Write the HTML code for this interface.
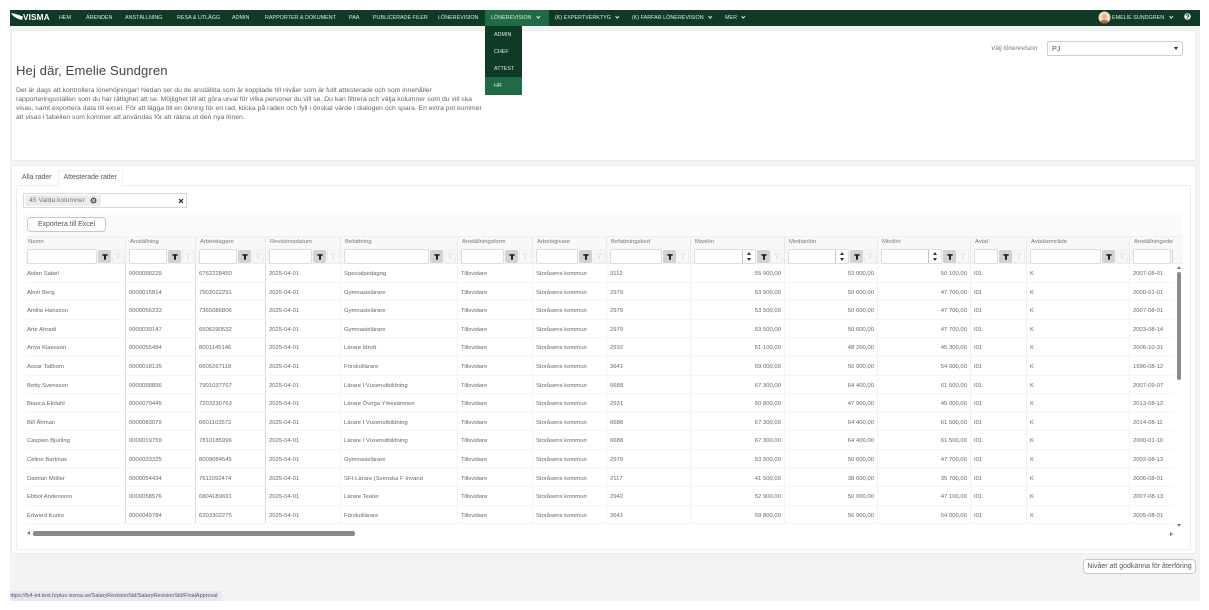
<!DOCTYPE html>
<html lang="sv"><head><meta charset="utf-8"><title>Lönerevision</title>
<style>
*{box-sizing:border-box}
html,body{margin:0;padding:0;background:#fff}
body{width:1209px;height:610px;overflow:hidden;position:relative;font-family:"Liberation Sans",sans-serif;color:#666;filter:blur(.3px)}
.a{position:absolute;white-space:nowrap}
#bg{left:10px;top:10px;width:1190px;height:591px;background:#f3f3f3}
#nav{left:10px;top:10px;width:1190px;height:15.5px;background:#0f3a25}
.n{position:absolute;top:14.5px;font-size:5.4px;line-height:7px;color:#dfe8e3;white-space:nowrap}
.panel{background:#fff;border:1px solid #ebebeb;border-radius:2px}
.ch{display:inline-block;width:2.6px;height:2.6px;border-right:.6px solid #dfe8e3;border-bottom:.6px solid #dfe8e3;transform:rotate(45deg);margin-left:5.5px;position:relative;top:-1px}
#tb{left:23px;top:213px;width:1160px;height:323px;background:#fff;overflow:hidden}
#head{position:absolute;left:3px;top:23px;height:28px;width:1160px;background:#f8f8f8;display:flex;border-top:1px solid #f0f0f0;border-bottom:1px solid #f0f0f0}
.h{position:relative;height:27px;border-right:1px solid #e8e8e8;font-size:5.9px;color:#777;padding:2px 0 0 4px;white-space:nowrap;overflow:hidden}
.f{position:absolute;left:3px;right:0;top:12px;height:15px;display:flex}
.f i{display:block;flex:1;min-width:0;background:#fff;border:1px solid #dcdcdc;border-radius:2px;position:relative;box-shadow:0 1px 1px #eee}
.f b{display:block;width:13px;height:13px;margin:1px 0 0 1px;background:#d2d2d2;border-radius:2px;position:relative;flex:none}
.f u{display:block;width:12px;height:13px;margin:1px 1px 0 1px;background:#f8f8f8;border:1px solid #eee;border-radius:2px;flex:none;position:relative}
.f svg{position:absolute;left:3.5px;top:3.5px;width:6px;height:6px}
.f u svg{left:2px;top:2px}
.sp{position:absolute;right:0;top:0;width:13px;height:13px;background:#fff;border-left:1px solid #c4c4c4}
.sp:before{content:"";position:absolute;left:3.5px;top:1.5px;border:2.5px solid transparent;border-top:0;border-bottom:3px solid #333}
.sp:after{content:"";position:absolute;left:3.5px;top:8px;border:2.5px solid transparent;border-bottom:0;border-top:3px solid #333}
#rows{position:absolute;left:3px;top:51px;width:1147px;height:268px;overflow:hidden}
.r{display:flex;height:18.6px;border-bottom:1px solid #f5f5f5;font-size:5.9px;line-height:20.5px;color:#666}
.r span{display:block;flex:none;padding-left:2px;white-space:nowrap;overflow:hidden;border-right:1px solid #f3f3f3}
.r span:nth-child(1){width:100px;padding-left:1px;border-right-color:#dcdcdc}
.r span:nth-child(2){width:70px;padding-left:3px;border-right-color:#dcdcdc}
.r span:nth-child(3){width:70px;padding-left:3px;border-right-color:#dcdcdc}
.r span:nth-child(4){width:75px;padding-left:3px}
.r span:nth-child(5){width:117px;padding-left:3px}
.r span:nth-child(6){width:75px;padding-left:3px}
.r span:nth-child(7){width:74px;padding-left:3px}
.r span:nth-child(8){width:84px;padding-left:3px}
.r span:nth-child(9){width:94px;text-align:right;padding-right:3px}
.r span:nth-child(10){width:93px;text-align:right;padding-right:3px}
.r span:nth-child(11){width:93px;text-align:right;padding-right:3px}
.r span:nth-child(12){width:56px;padding-left:3px}
.r span:nth-child(13){width:103px;padding-left:3px}
.r span:nth-child(14){width:43px;padding-left:3px;border:0}
.btn{background:#fff;border:1px solid #c8c8c8;border-radius:4px;color:#555;text-align:center}
</style></head><body>
<div class="a" id="bg"></div>
<div class="a" id="nav"></div>
<svg class="a" style="left:10.5px;top:12px" width="12" height="10" viewBox="0 0 12 10"><path d="M0 1.5 C3 1 7 3 12 4.5 L11 8 C7 7 3 5.5 0 1.5Z" fill="#fff"/></svg>
<div class="a" style="left:23px;top:12px;font-size:8.3px;line-height:11px;font-weight:bold;color:#fff;letter-spacing:.1px">VISMA</div>
<div class="n" style="left:59px">HEM</div>
<div class="n" style="left:86px">ÄRENDEN</div>
<div class="n" style="left:125px">ANSTÄLLNING</div>
<div class="n" style="left:177px">RESA &amp; UTLÄGG</div>
<div class="n" style="left:232px">ADMIN</div>
<div class="n" style="left:265px">RAPPORTER &amp; DOKUMENT</div>
<div class="n" style="left:349px">PAA</div>
<div class="n" style="left:373px">PUBLICERADE FILER</div>
<div class="n" style="left:438px">LÖNEREVISION</div>
<div class="a" style="left:485px;top:10px;width:64px;height:15.5px;background:#1f6b46"></div>
<div class="n" style="left:491px">LÖNEREVISION<span class="ch"></span></div>
<div class="n" style="left:555px">(K) EXPERTVERKTYG<span class="ch"></span></div>
<div class="n" style="left:632px">(K) FARFAR LÖNEREVISION<span class="ch"></span></div>
<div class="n" style="left:725px">MER<span class="ch"></span></div>
<svg class="a" style="left:1098px;top:11px" width="13" height="13" viewBox="0 0 13 13"><circle cx="6.5" cy="6.5" r="6" fill="#f3dcc4"/><circle cx="6.5" cy="5.5" r="2.6" fill="#e8b48c"/><path d="M2.5 11 C3 8 10 8 10.5 11 L8 12.5 H5Z" fill="#c0604a"/></svg>
<div class="n" style="left:1112px">EMELIE SUNDGREN<span class="ch"></span></div>
<svg class="a" style="left:1184px;top:13px" width="7" height="7" viewBox="0 0 7 7"><circle cx="3.5" cy="3.5" r="3.3" fill="#e8eeea"/><path d="M2.3 2.7C2.4 1.4 4.7 1.4 4.7 2.7 4.7 3.6 3.5 3.5 3.5 4.4" fill="none" stroke="#0f3a25" stroke-width=".9"/><rect x="3.1" y="5" width=".8" height=".8" fill="#0f3a25"/></svg>

<div class="a panel" style="left:10.5px;top:30px;width:1185px;height:130.5px"></div>
<div class="a" style="left:485px;top:25.5px;width:37px;height:69px;background:#0f3a25;z-index:3"></div>
<div class="a" style="left:485px;top:77px;width:37px;height:17.5px;background:#1f6b46;z-index:3"></div>
<div class="n" style="left:494px;top:31.5px;z-index:4">ADMIN</div>
<div class="n" style="left:494px;top:48.5px;z-index:4">CHEF</div>
<div class="n" style="left:494px;top:65.5px;z-index:4">ATTEST</div>
<div class="n" style="left:494px;top:82.5px;z-index:4">HR</div>

<div class="a" style="left:16px;top:63px;font-size:13.1px;line-height:15px;color:#444;letter-spacing:.1px">Hej där, Emelie Sundgren</div>
<div class="a" style="left:16px;top:85.5px;width:490px;font-size:6.82px;line-height:9.2px;color:#666;white-space:pre-line">Det är dags att kontrollera lönehöjningar! Nedan ser du de anställda som är kopplade till nivåer som är fullt attesterade och som innehåller
rapporteringsställen som du har rättighet att se. Möjlighet till att göra urval för vilka personer du vill se. Du kan filtrera och välja kolumner som du vill ska
visas, samt exportera data till excel. För att lägga till en ökning för en rad, klicka på raden och fyll i önskat värde i dialogen och spara. En extra pot kommer
att visas i tabellen som kommer att användas för att räkna ut den nya lönen.</div>
<div class="a" style="left:991px;top:44.5px;font-size:6.4px;line-height:8px;font-style:italic;color:#777">Välj lönerevision</div>
<div class="a" style="left:1047px;top:41px;width:136px;height:15px;background:#fff;border:1px solid #cfcfcf;border-radius:2px;font-size:7.2px;line-height:13.5px;color:#555;padding-left:4px">PJ<div class="a" style="right:4px;top:5px;border:2px solid transparent;border-bottom:0;border-top:3px solid #222"></div></div>

<div class="a panel" style="left:11px;top:165px;width:1184.5px;height:389px"></div>
<div class="a" style="left:22px;top:173px;font-size:6.9px;line-height:9px;color:#555">Alla rader</div>
<div class="a" style="left:57.5px;top:170px;width:65px;height:16px;background:#fff;border:1px solid #f1f1f1;border-bottom:1px solid #fff;z-index:2;font-size:6.9px;line-height:14px;color:#555;padding-left:5px">Attesterade rader</div>
<div class="a" style="left:16px;top:185px;width:1175px;height:364.5px;background:#fff;border:1px solid #ededed;border-radius:2px"></div>

<div class="a" style="left:23px;top:193px;width:164px;height:15px;background:#fff;border:1px solid #d8d8d8"></div>
<div class="a" style="left:25px;top:195px;width:76px;height:11px;background:#ececec;border-radius:2px;font-size:6.75px;line-height:11px;color:#777;padding-left:4px">45 Valda kolumner</div>
<svg class="a" style="left:90px;top:197px" width="7" height="7" viewBox="0 0 7 7"><circle cx="3.5" cy="3.5" r="3" fill="#555"/><path d="M2.2 2.2l2.6 2.6M4.8 2.2L2.2 4.8" stroke="#eee" stroke-width=".8"/></svg>
<svg class="a" style="left:178px;top:197.5px" width="6" height="6" viewBox="0 0 6 6"><path d="M1 1l4 4M5 1L1 5" stroke="#222" stroke-width="1.2"/></svg>

<div class="a" id="tb">
<div class="a" style="left:0;top:0;width:1160px;height:23px;background:#fafafa"></div>
<div class="a btn" style="left:4px;top:3.5px;width:79px;height:15px;font-size:6.9px;line-height:13px;z-index:1">Exportera till Excel</div>
<div id="head">
<div class="h" style="width:100px;padding-left:2px">Namn<div class="f" style="left:1px"><i></i><b><svg viewBox="0 0 10 10"><path d="M.5.5h9v2.3H6.5V9.5h-3V2.8H.5z" fill="#111"/></svg></b><u><svg viewBox="0 0 10 10"><path d="M.5.5h9L6 4.5v5H4v-5z" fill="none" stroke="#ddd"/></svg></u></div></div>
<div class="h" style="width:70px">Anställning<div class="f"><i></i><b><svg viewBox="0 0 10 10"><path d="M.5.5h9v2.3H6.5V9.5h-3V2.8H.5z" fill="#111"/></svg></b><u><svg viewBox="0 0 10 10"><path d="M.5.5h9L6 4.5v5H4v-5z" fill="none" stroke="#ddd"/></svg></u></div></div>
<div class="h" style="width:70px">Arbetstagare<div class="f"><i></i><b><svg viewBox="0 0 10 10"><path d="M.5.5h9v2.3H6.5V9.5h-3V2.8H.5z" fill="#111"/></svg></b><u><svg viewBox="0 0 10 10"><path d="M.5.5h9L6 4.5v5H4v-5z" fill="none" stroke="#ddd"/></svg></u></div></div>
<div class="h" style="width:75px">Revisionsdatum<div class="f"><i></i><b><svg viewBox="0 0 10 10"><path d="M.5.5h9v2.3H6.5V9.5h-3V2.8H.5z" fill="#111"/></svg></b><u><svg viewBox="0 0 10 10"><path d="M.5.5h9L6 4.5v5H4v-5z" fill="none" stroke="#ddd"/></svg></u></div></div>
<div class="h" style="width:117px">Befattning<div class="f"><i></i><b><svg viewBox="0 0 10 10"><path d="M.5.5h9v2.3H6.5V9.5h-3V2.8H.5z" fill="#111"/></svg></b><u><svg viewBox="0 0 10 10"><path d="M.5.5h9L6 4.5v5H4v-5z" fill="none" stroke="#ddd"/></svg></u></div></div>
<div class="h" style="width:75px">Anställningsform<div class="f"><i></i><b><svg viewBox="0 0 10 10"><path d="M.5.5h9v2.3H6.5V9.5h-3V2.8H.5z" fill="#111"/></svg></b><u><svg viewBox="0 0 10 10"><path d="M.5.5h9L6 4.5v5H4v-5z" fill="none" stroke="#ddd"/></svg></u></div></div>
<div class="h" style="width:74px">Arbetsgivare<div class="f"><i></i><b><svg viewBox="0 0 10 10"><path d="M.5.5h9v2.3H6.5V9.5h-3V2.8H.5z" fill="#111"/></svg></b><u><svg viewBox="0 0 10 10"><path d="M.5.5h9L6 4.5v5H4v-5z" fill="none" stroke="#ddd"/></svg></u></div></div>
<div class="h" style="width:84px">Befattningskod<div class="f"><i></i><b><svg viewBox="0 0 10 10"><path d="M.5.5h9v2.3H6.5V9.5h-3V2.8H.5z" fill="#111"/></svg></b><u><svg viewBox="0 0 10 10"><path d="M.5.5h9L6 4.5v5H4v-5z" fill="none" stroke="#ddd"/></svg></u></div></div>
<div class="h" style="width:94px">Maxlön<div class="f"><i><em class="sp"></em></i><b><svg viewBox="0 0 10 10"><path d="M.5.5h9v2.3H6.5V9.5h-3V2.8H.5z" fill="#111"/></svg></b><u><svg viewBox="0 0 10 10"><path d="M.5.5h9L6 4.5v5H4v-5z" fill="none" stroke="#ddd"/></svg></u></div></div>
<div class="h" style="width:93px">Medianlön<div class="f"><i><em class="sp"></em></i><b><svg viewBox="0 0 10 10"><path d="M.5.5h9v2.3H6.5V9.5h-3V2.8H.5z" fill="#111"/></svg></b><u><svg viewBox="0 0 10 10"><path d="M.5.5h9L6 4.5v5H4v-5z" fill="none" stroke="#ddd"/></svg></u></div></div>
<div class="h" style="width:93px">Minilön<div class="f"><i><em class="sp"></em></i><b><svg viewBox="0 0 10 10"><path d="M.5.5h9v2.3H6.5V9.5h-3V2.8H.5z" fill="#111"/></svg></b><u><svg viewBox="0 0 10 10"><path d="M.5.5h9L6 4.5v5H4v-5z" fill="none" stroke="#ddd"/></svg></u></div></div>
<div class="h" style="width:56px">Avtal<div class="f"><i></i><b><svg viewBox="0 0 10 10"><path d="M.5.5h9v2.3H6.5V9.5h-3V2.8H.5z" fill="#111"/></svg></b><u><svg viewBox="0 0 10 10"><path d="M.5.5h9L6 4.5v5H4v-5z" fill="none" stroke="#ddd"/></svg></u></div></div>
<div class="h" style="width:103px">Avtalsområde<div class="f"><i></i><b><svg viewBox="0 0 10 10"><path d="M.5.5h9v2.3H6.5V9.5h-3V2.8H.5z" fill="#111"/></svg></b><u><svg viewBox="0 0 10 10"><path d="M.5.5h9L6 4.5v5H4v-5z" fill="none" stroke="#ddd"/></svg></u></div></div>
<div class="h" style="width:43px;border:0">Anställningsdatum<div class="a" style="left:3px;top:12px;width:38px;height:15px;background:#fff;border:1px solid #dcdcdc;border-radius:2px"></div><div class="a" style="left:42px;top:13px;width:1px;height:13px;background:#d2d2d2"></div></div>
</div>
<div id="rows">
<div class="r"><span>Aiden Sabel</span><span>0000058229</span><span>6762228450</span><span>2025-04-01</span><span>Specialpedagog</span><span>Tillsvidare</span><span>Storåsens kommun</span><span>3112</span><span>55 900,00</span><span>53 000,00</span><span>50 100,00</span><span>I01</span><span>K</span><span>2007-08-01</span></div>
<div class="r"><span>Almir Berg</span><span>0000015814</span><span>7502022291</span><span>2025-04-01</span><span>Gymnasielärare</span><span>Tillsvidare</span><span>Storåsens kommun</span><span>2979</span><span>53 500,00</span><span>50 600,00</span><span>47 700,00</span><span>I01</span><span>K</span><span>2000-01-01</span></div>
<div class="r"><span>Amilia Hansson</span><span>0000056233</span><span>7365086806</span><span>2025-04-01</span><span>Gymnasielärare</span><span>Tillsvidare</span><span>Storåsens kommun</span><span>2979</span><span>53 500,00</span><span>50 600,00</span><span>47 700,00</span><span>I01</span><span>K</span><span>2007-08-01</span></div>
<div class="r"><span>Arte Ahradi</span><span>0000039147</span><span>6506290532</span><span>2025-04-01</span><span>Gymnasielärare</span><span>Tillsvidare</span><span>Storåsens kommun</span><span>2979</span><span>53 500,00</span><span>50 600,00</span><span>47 700,00</span><span>I01</span><span>K</span><span>2003-08-14</span></div>
<div class="r"><span>Anya Klaesson</span><span>0000055484</span><span>8001145146</span><span>2025-04-01</span><span>Lärare Idrott</span><span>Tillsvidare</span><span>Storåsens kommun</span><span>2932</span><span>51 100,00</span><span>48 200,00</span><span>45 300,00</span><span>I01</span><span>K</span><span>2006-10-31</span></div>
<div class="r"><span>Assar Tallbom</span><span>0000018135</span><span>6605267118</span><span>2025-04-01</span><span>Förskollärare</span><span>Tillsvidare</span><span>Storåsens kommun</span><span>3641</span><span>59 000,00</span><span>56 900,00</span><span>54 000,00</span><span>I01</span><span>K</span><span>1996-08-12</span></div>
<div class="r"><span>Betty Svensson</span><span>0000058856</span><span>7901037767</span><span>2025-04-01</span><span>Lärare I Vuxenutbildning</span><span>Tillsvidare</span><span>Storåsens kommun</span><span>6688</span><span>67 300,00</span><span>64 400,00</span><span>61 500,00</span><span>I01</span><span>K</span><span>2007-09-07</span></div>
<div class="r"><span>Bianca Ekdahl</span><span>0000079445</span><span>7203230763</span><span>2025-04-01</span><span>Lärare Övriga Yrkesämnen</span><span>Tillsvidare</span><span>Storåsens kommun</span><span>2931</span><span>50 800,00</span><span>47 900,00</span><span>45 000,00</span><span>I01</span><span>K</span><span>2013-08-12</span></div>
<div class="r"><span>Bill Åhman</span><span>0000083079</span><span>6601103572</span><span>2025-04-01</span><span>Lärare I Vuxenutbildning</span><span>Tillsvidare</span><span>Storåsens kommun</span><span>6688</span><span>67 300,00</span><span>64 400,00</span><span>61 500,00</span><span>I01</span><span>K</span><span>2014-08-11</span></div>
<div class="r"><span>Caspian Bjurling</span><span>0000019759</span><span>7810185996</span><span>2025-04-01</span><span>Lärare I Vuxenutbildning</span><span>Tillsvidare</span><span>Storåsens kommun</span><span>6688</span><span>67 300,00</span><span>64 400,00</span><span>61 500,00</span><span>I01</span><span>K</span><span>2000-01-10</span></div>
<div class="r"><span>Céline Barkhas</span><span>0000033325</span><span>8009084545</span><span>2025-04-01</span><span>Gymnasielärare</span><span>Tillsvidare</span><span>Storåsens kommun</span><span>2979</span><span>53 500,00</span><span>50 600,00</span><span>47 700,00</span><span>I01</span><span>K</span><span>2002-08-13</span></div>
<div class="r"><span>Damian Möller</span><span>0000054434</span><span>7611092474</span><span>2025-04-01</span><span>SFI-Lärare (Svenska F Invand</span><span>Tillsvidare</span><span>Storåsens kommun</span><span>2117</span><span>41 500,00</span><span>38 600,00</span><span>35 700,00</span><span>I01</span><span>K</span><span>2006-08-01</span></div>
<div class="r"><span>Ebbot Andersson</span><span>0000058576</span><span>6804189691</span><span>2025-04-01</span><span>Lärare Teater</span><span>Tillsvidare</span><span>Storåsens kommun</span><span>2942</span><span>52 900,00</span><span>50 000,00</span><span>47 100,00</span><span>I01</span><span>K</span><span>2007-08-13</span></div>
<div class="r"><span>Edward Kurko</span><span>0000049784</span><span>6203302275</span><span>2025-04-01</span><span>Förskollärare</span><span>Tillsvidare</span><span>Storåsens kommun</span><span>3641</span><span>59 800,00</span><span>56 900,00</span><span>54 000,00</span><span>I01</span><span>K</span><span>2005-08-01</span></div>
</div>
<div class="a" style="left:1154px;top:59px;width:4px;height:108px;background:#8a8a8a;border-radius:2px"></div>
<div class="a" style="left:1154px;top:53px;border:2px solid transparent;border-top:0;border-bottom:3px solid #777"></div>
<div class="a" style="left:1154px;top:311px;border:2px solid transparent;border-bottom:0;border-top:3px solid #777"></div>
<div class="a" style="left:10px;top:318px;width:322px;height:4.5px;background:#8a8a8a;border-radius:2px"></div>
<div class="a" style="left:4px;top:318px;border:2px solid transparent;border-left:0;border-right:3px solid #777"></div>
<div class="a" style="left:1147px;top:319px;border:2px solid transparent;border-right:0;border-left:3px solid #777"></div>
</div>

<div class="a btn" style="left:1083px;top:559px;width:113px;height:15px;font-size:7px;line-height:13px">Nivåer att godkänna för återföring</div>
<div class="a" style="left:10px;top:591px;width:211px;height:10px;background:#ebe4f5;font-size:5.47px;line-height:10px;color:#555;overflow:hidden;text-indent:-1px">https://fx4-int.test.hrplus.visma.se/SalaryRevisionStd/SalaryRevisionStd/FinalApproval</div>
</body></html>
